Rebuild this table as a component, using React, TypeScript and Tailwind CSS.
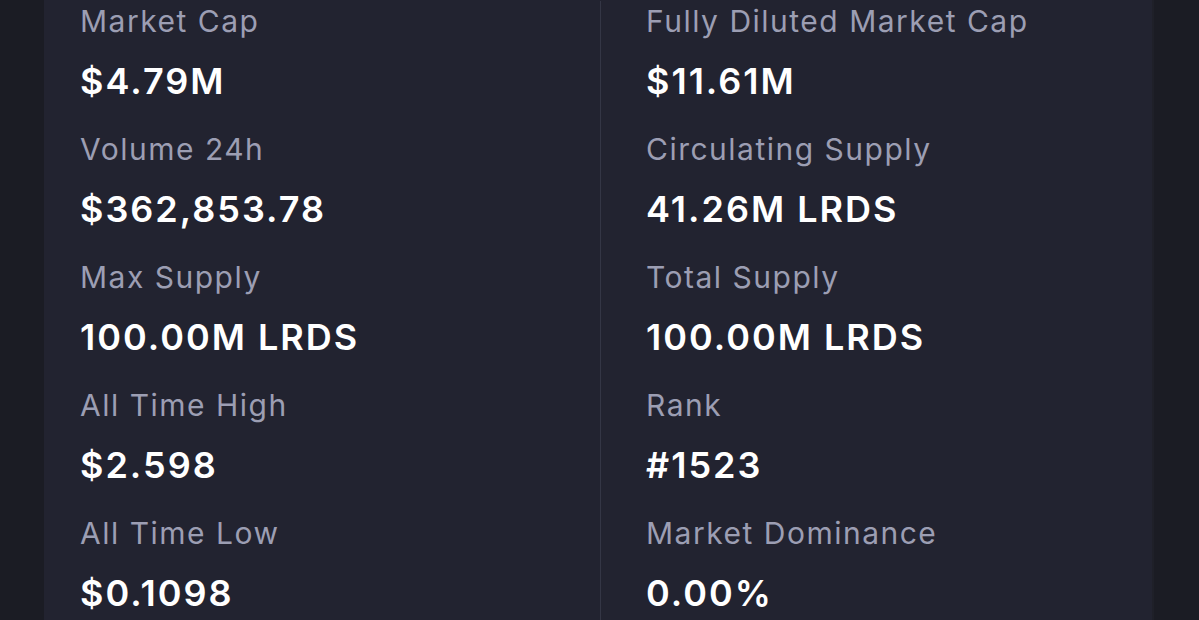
const left = [
  { label: "Market Cap", value: "$4.79M" },
  { label: "Volume 24h", value: "$362,853.78" },
  { label: "Max Supply", value: "100.00M LRDS" },
  { label: "All Time High", value: "$2.598" },
  { label: "All Time Low", value: "$0.1098" },
];

const right = [
  { label: "Fully Diluted Market Cap", value: "$11.61M" },
  { label: "Circulating Supply", value: "41.26M LRDS" },
  { label: "Total Supply", value: "100.00M LRDS" },
  { label: "Rank", value: "#1523" },
  { label: "Market Dominance", value: "0.00%" },
];

const Stat = ({ label, value }: { label: string; value: string }) => (
  <div className="flex flex-col">
    <span className="text-[30px] leading-[40px] text-[#9c9eb3] tracking-[1.5px]">{label}</span>
    <span className="mt-[18px] mb-[26px] text-[36px] leading-[44px] font-semibold text-white tracking-[2px]">{value}</span>
  </div>
);

export default function App() {
  return (
    <div className="h-[620px] w-full overflow-hidden bg-[#1b1c24]" style={{ fontFamily: "Inter, 'Noto Sans', sans-serif" }}>
      <div className="ml-[44px] w-[1110px] rounded-b-[22px] bg-[#222330] pb-[12px] border-r-[2px] border-[#1f2029]">
        <div className="grid grid-cols-[556px_1fr] pt-px">
          <div className="pl-[36px]">
            {left.map((s) => (
              <Stat key={s.label} {...s} />
            ))}
          </div>
          <div className="border-l border-[#343645] pl-[45px] -mb-[24px]">
            {right.map((s) => (
              <Stat key={s.label} {...s} />
            ))}
          </div>
        </div>
      </div>
    </div>
  );
}
